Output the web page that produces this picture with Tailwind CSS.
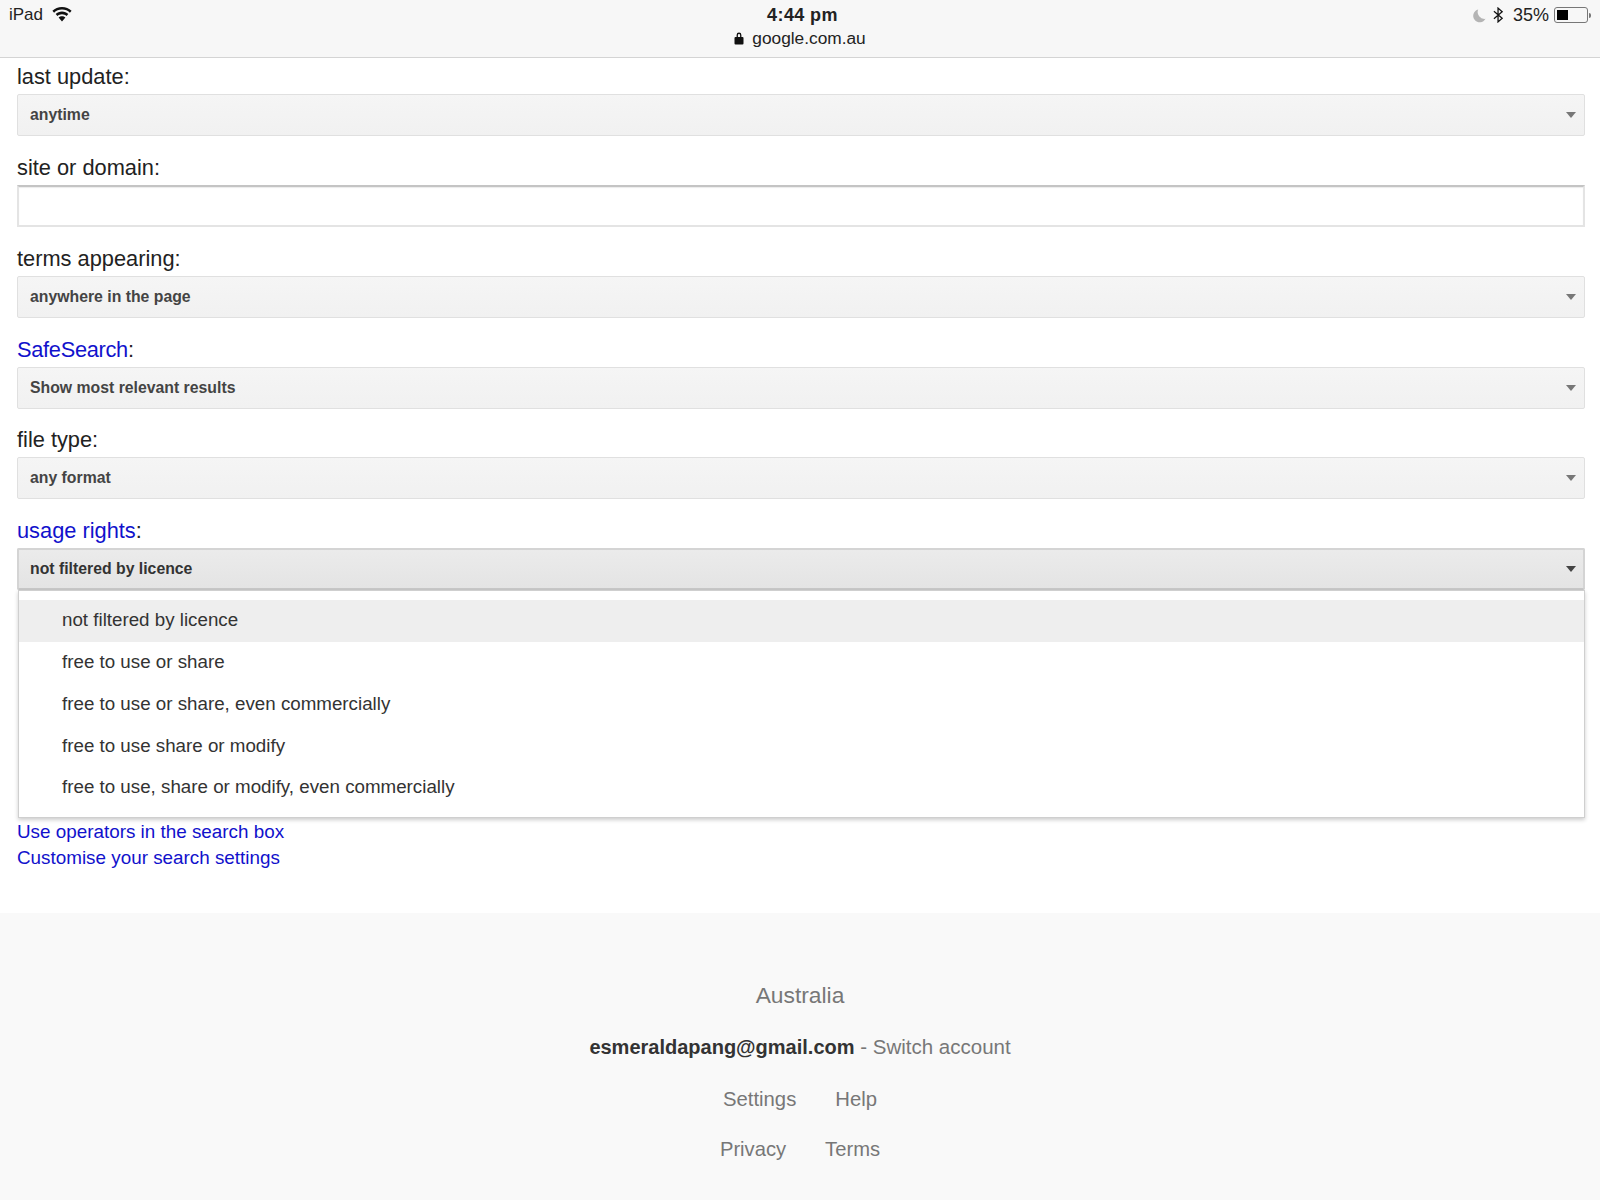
<!DOCTYPE html>
<html lang="en">
<head>
    <meta charset="UTF-8">
    <meta name="viewport" content="width=device-width, initial-scale=1.0">
    <title>Advanced Search</title>
    <script src="https://cdn.jsdelivr.net/npm/@tailwindcss/browser@4"></script>
</head>
<body class="bg-white font-['Liberation_Sans',Arial,sans-serif] text-[#222]">
<div class="w-[1600px] h-[1200px] overflow-hidden flex flex-col">

    <!-- status bar -->
    <header class="h-[58px] shrink-0 bg-[#f7f7f7] border-b border-[#d4d4d4] flex justify-between px-[9px] pt-[4px] relative">
        <div class="flex items-start gap-[9px] text-[17px] leading-[22px] text-[#222]">
            <span>iPad</span>
            <svg class="w-[20px] h-[15px] mt-[3px]" viewBox="0 0 20 15" fill="#111">
                <path d="M10 0C6.2 0 2.9 1.4.4 3.8l1.7 1.9C4.1 3.7 6.9 2.6 10 2.6s5.9 1.1 7.9 3.1l1.7-1.9C17.1 1.4 13.8 0 10 0z"/>
                <path d="M10 4.6c-2.5 0-4.7 1-6.3 2.5l1.7 1.9C6.6 7.9 8.2 7.2 10 7.2s3.4.7 4.6 1.8l1.7-1.9C14.7 5.6 12.5 4.6 10 4.6z"/>
                <path d="M10 9.2c-1.3 0-2.5.5-3.4 1.4L10 14.6l3.4-4c-.9-.9-2.1-1.4-3.4-1.4z"/>
            </svg>
        </div>
        <div class="absolute left-[0px] right-[0px] top-[4px] flex flex-col items-center">
            <span class="text-[18px] leading-[22px] font-bold tracking-[0.4px] text-[#222] ml-[5px]">4:44 pm</span>
            <div class="flex items-center gap-[8px] mt-[1px]">
                <svg class="w-[10px] h-[14px]" viewBox="0 0 10 14" fill="#111">
                    <path d="M2.6 6V4a2.4 2.4 0 0 1 4.8 0v2h-1.300V4a1.100 1.100 0 0 0-2.200 0v2z"/>
                    <rect x="0.500" y="6" width="9" height="7.500" rx="1"/>
                </svg>
                <span class="text-[17.300px] leading-[22px] text-[#222]">google.com.au</span>
            </div>
        </div>
        <div class="flex items-start text-[18px] leading-[22px] text-[#222]">
            <svg class="w-[14px] h-[14px] mt-[5px]" viewBox="0 0 14 14" fill="#b4b4b4">
                <path d="M6.200 0.500A6.500 6.500 0 1 0 13.500 9.800 6.800 6.800 0 0 1 6.200 0.500z"/>
            </svg>
            <svg class="w-[11px] h-[16px] mt-[3px] ml-[7px]" viewBox="0 0 12 17" fill="none" stroke="#111" stroke-width="1.400">
                <path d="M1 4.500l9 7.500-4.500 4V1L10 5 1 12.500"/>
            </svg>
            <span class="ml-[9px]">35%</span>
            <div class="flex items-center mt-[3px] ml-[5px]">
                <div class="w-[34px] h-[16px] border border-[#777] rounded-[3px] p-[2px] flex">
                    <div class="w-[11px] bg-black"></div>
                </div>
                <div class="w-[2px] h-[5px] bg-[#777] rounded-r-[2px] ml-[1px]"></div>
            </div>
        </div>
    </header>

    <!-- form -->
    <main class="flex-1 pl-[17px] pr-[15px] relative">
        <section class="h-[91px] flex flex-col">
            <label class="h-[36px] text-[21.800px] leading-[38px] text-[#222]">last update:</label>
            <div class="h-[42px] flex items-center justify-between pl-[12px] pr-[8px] rounded-[2px] border border-[#e0e0e0] bg-gradient-to-b from-[#f5f5f5] to-[#f1f1f1]">
                <span class="text-[15.800px] font-bold text-[#444]">anytime</span>
                <div class="w-0 h-0 border-x-[5.500px] border-x-transparent border-t-[6px] border-t-[#777]"></div>
            </div>
        </section>
        <section class="h-[91px] flex flex-col">
            <label class="h-[36px] text-[21.800px] leading-[38px] text-[#222]">site or domain:</label>
            <div class="h-[42px] border-2 border-[#e4e4e4] border-t-[#c4c4c4] bg-white shadow-[inset_0_1px_1px_rgba(0,0,0,0.08)]"></div>
        </section>
        <section class="h-[91px] flex flex-col">
            <label class="h-[36px] text-[21.800px] leading-[37px] text-[#222]">terms appearing:</label>
            <div class="h-[42px] flex items-center justify-between pl-[12px] pr-[8px] rounded-[2px] border border-[#e0e0e0] bg-gradient-to-b from-[#f5f5f5] to-[#f1f1f1]">
                <span class="text-[15.800px] font-bold text-[#444]">anywhere in the page</span>
                <div class="w-0 h-0 border-x-[5.500px] border-x-transparent border-t-[6px] border-t-[#777]"></div>
            </div>
        </section>
        <section class="h-[90px] flex flex-col">
            <label class="h-[36px] text-[21.800px] leading-[37px] text-[#222] tracking-[-0.3px]"><a class="text-[#1111cc]">SafeSearch</a>:</label>
            <div class="h-[42px] flex items-center justify-between pl-[12px] pr-[8px] rounded-[2px] border border-[#e0e0e0] bg-gradient-to-b from-[#f5f5f5] to-[#f1f1f1]">
                <span class="text-[15.800px] font-bold text-[#444]">Show most relevant results</span>
                <div class="w-0 h-0 border-x-[5.500px] border-x-transparent border-t-[6px] border-t-[#777]"></div>
            </div>
        </section>
        <section class="h-[91px] flex flex-col">
            <label class="h-[36px] text-[21.800px] leading-[38px] text-[#222]">file type:</label>
            <div class="h-[42px] flex items-center justify-between pl-[12px] pr-[8px] rounded-[2px] border border-[#e0e0e0] bg-gradient-to-b from-[#f5f5f5] to-[#f1f1f1]">
                <span class="text-[15.800px] font-bold text-[#444]">any format</span>
                <div class="w-0 h-0 border-x-[5.500px] border-x-transparent border-t-[6px] border-t-[#777]"></div>
            </div>
        </section>
        <section class="h-[78px] flex flex-col">
            <label class="h-[36px] text-[21.800px] leading-[37px] text-[#222]"><a class="text-[#1111cc]">usage rights</a>:</label>
            <div class="h-[42px] flex items-center justify-between pl-[12px] pr-[8px] rounded-[2px] border-2 border-[#d4d4d4] border-b-[#c8c8c8] bg-gradient-to-b from-[#ebebeb] to-[#e4e4e4]">
                <span class="text-[15.800px] font-bold text-[#333] ml-[-1px]">not filtered by licence</span>
                <div class="w-0 h-0 border-x-[5.500px] border-x-transparent border-t-[6px] border-t-[#444] mr-[-1px]"></div>
            </div>
        </section>

        <!-- open dropdown, over the rest of the form -->
        <div class="absolute left-[18px] right-[15px] top-[532px] h-[228px] bg-white border border-[#cfcfcf] shadow-[0_2px_4px_rgba(0,0,0,0.2)] pt-[9px] text-[18.750px] text-[#333] z-10">
            <div class="h-[42px] bg-[#eeeeee] pl-[43px] flex items-center pb-[1px]">not filtered by licence</div>
            <div class="h-[42px] pl-[43px] flex items-center pb-[1px]">free to use or share</div>
            <div class="h-[42px] pl-[43px] flex items-center pb-[1px]">free to use or share, even commercially</div>
            <div class="h-[41px] pl-[43px] flex items-center pb-[1px]">free to use share or modify</div>
            <div class="h-[42px] pl-[43px] flex items-center pb-[1px]">free to use, share or modify, even commercially</div>
        </div>

        <div class="pt-[229px] flex flex-col text-[18.850px] leading-[26px] text-[#1111cc]">
            <a>Use operators in the search box</a>
            <a>Customise your search settings</a>
        </div>
    </main>

    <!-- footer -->
    <footer class="h-[287px] shrink-0 bg-[#f9f9f9] flex flex-col items-center text-[#777] pt-[67px]">
        <div class="h-[30px] text-[22.800px] leading-[30px]">Australia</div>
        <div class="mt-[22px] h-[30px] text-[20.500px] leading-[30px]">
            <span class="font-bold text-[20px] text-[#333]">esmeraldapang@gmail.com</span> - Switch account
        </div>
        <div class="mt-[22px] h-[30px] flex gap-[39px] text-[20.300px] leading-[30px]">
            <a>Settings</a>
            <a>Help</a>
        </div>
        <div class="mt-[20px] h-[30px] flex gap-[39px] text-[20.200px] leading-[30px]">
            <a>Privacy</a>
            <a>Terms</a>
        </div>
    </footer>
</div>
</body>
</html>
